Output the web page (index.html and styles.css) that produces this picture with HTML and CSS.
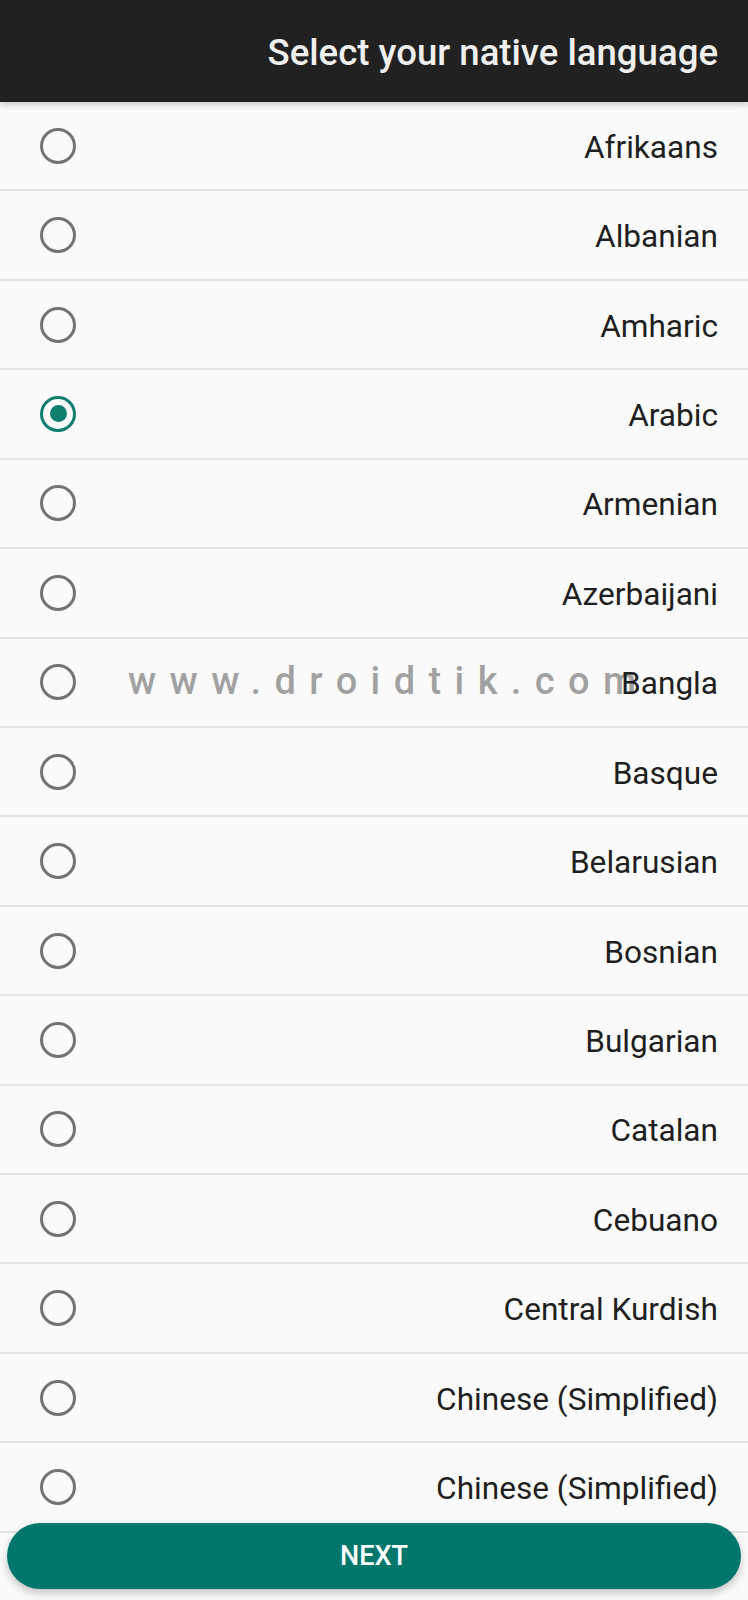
FILE: index.html
```html
<!DOCTYPE html>
<html>
<head>
<meta charset="utf-8">
<link rel="stylesheet" href="styles.css">
</head>
<body>
<div class="screen">
  <header class="appbar">Select your native language</header>
  <main class="list">
    <div class="row"><span class="radio"></span><span class="label">Afrikaans</span></div>
    <div class="row"><span class="radio"></span><span class="label">Albanian</span></div>
    <div class="row"><span class="radio"></span><span class="label">Amharic</span></div>
    <div class="row"><span class="radio checked"></span><span class="label">Arabic</span></div>
    <div class="row"><span class="radio"></span><span class="label">Armenian</span></div>
    <div class="row"><span class="radio"></span><span class="label">Azerbaijani</span></div>
    <div class="row"><span class="radio"></span><span class="label">Bangla</span><span class="watermark">www.droidtik.com</span></div>
    <div class="row"><span class="radio"></span><span class="label">Basque</span></div>
    <div class="row"><span class="radio"></span><span class="label">Belarusian</span></div>
    <div class="row"><span class="radio"></span><span class="label">Bosnian</span></div>
    <div class="row"><span class="radio"></span><span class="label">Bulgarian</span></div>
    <div class="row"><span class="radio"></span><span class="label">Catalan</span></div>
    <div class="row"><span class="radio"></span><span class="label">Cebuano</span></div>
    <div class="row"><span class="radio"></span><span class="label">Central Kurdish</span></div>
    <div class="row"><span class="radio"></span><span class="label">Chinese (Simplified)</span></div>
    <div class="row"><span class="radio"></span><span class="label">Chinese (Simplified)</span></div>
  </main>
  <button class="next">NEXT</button>
</div>
</body>
</html>
```

FILE: styles.css
```css
html, body {
  margin: 0;
  padding: 0;
}
body {
  background: #fafafa;
  font-family: Roboto, "Noto Sans", "Liberation Sans", sans-serif;
}
.screen {
  position: relative;
  width: 748px;
  height: 1600px;
  overflow: hidden;
  background: #fafafa;
}
.appbar {
  position: relative;
  z-index: 2;
  height: 102px;
  box-sizing: border-box;
  background: #212121;
  color: #efefef;
  font-size: 36.6px;
  font-weight: 500;
  display: flex;
  align-items: center;
  justify-content: flex-end;
  padding: 3px 30px 0 0;
  box-shadow: 0 3px 6px rgba(0,0,0,0.18);
}
.list {
  display: flex;
  flex-direction: column;
}
.row {
  position: relative;
  height: 89.43px;
  flex: 0 0 89.43px;
  box-sizing: border-box;
  border-bottom: 2px solid #e2e2e2;
  display: flex;
  align-items: center;
  padding: 0 30px 0 40px;
}
.radio {
  width: 36px;
  height: 36px;
  box-sizing: border-box;
  border: 3.4px solid #737373;
  border-radius: 50%;
  flex: none;
  display: flex;
  align-items: center;
  justify-content: center;
}
.radio.checked {
  border: 3.8px solid #0f7f6d;
}
.radio.checked::after {
  content: "";
  width: 17px;
  height: 17px;
  border-radius: 50%;
  background: #0f7f6d;
}
.label {
  position: relative;
  z-index: 1;
  margin-left: auto;
  padding-top: 3px;
  font-size: 31.6px;
  color: #1f1f1f;
}
.watermark {
  position: absolute;
  left: 128px;
  top: 20px;
  font-size: 38px;
  font-weight: 500;
  letter-spacing: 13.4px;
  color: rgba(145,145,145,0.85);
  white-space: nowrap;
  pointer-events: none;
}
.next {
  position: absolute;
  left: 7px;
  right: 7px;
  top: 1523px;
  height: 66px;
  border: none;
  border-radius: 33px;
  background: #00776a;
  color: #ffffff;
  font-family: Roboto, "Noto Sans", "Liberation Sans", sans-serif;
  font-size: 27px;
  font-weight: 500;
  box-shadow: 0 4px 8px rgba(0,0,0,0.22);
  z-index: 3;
}
```
